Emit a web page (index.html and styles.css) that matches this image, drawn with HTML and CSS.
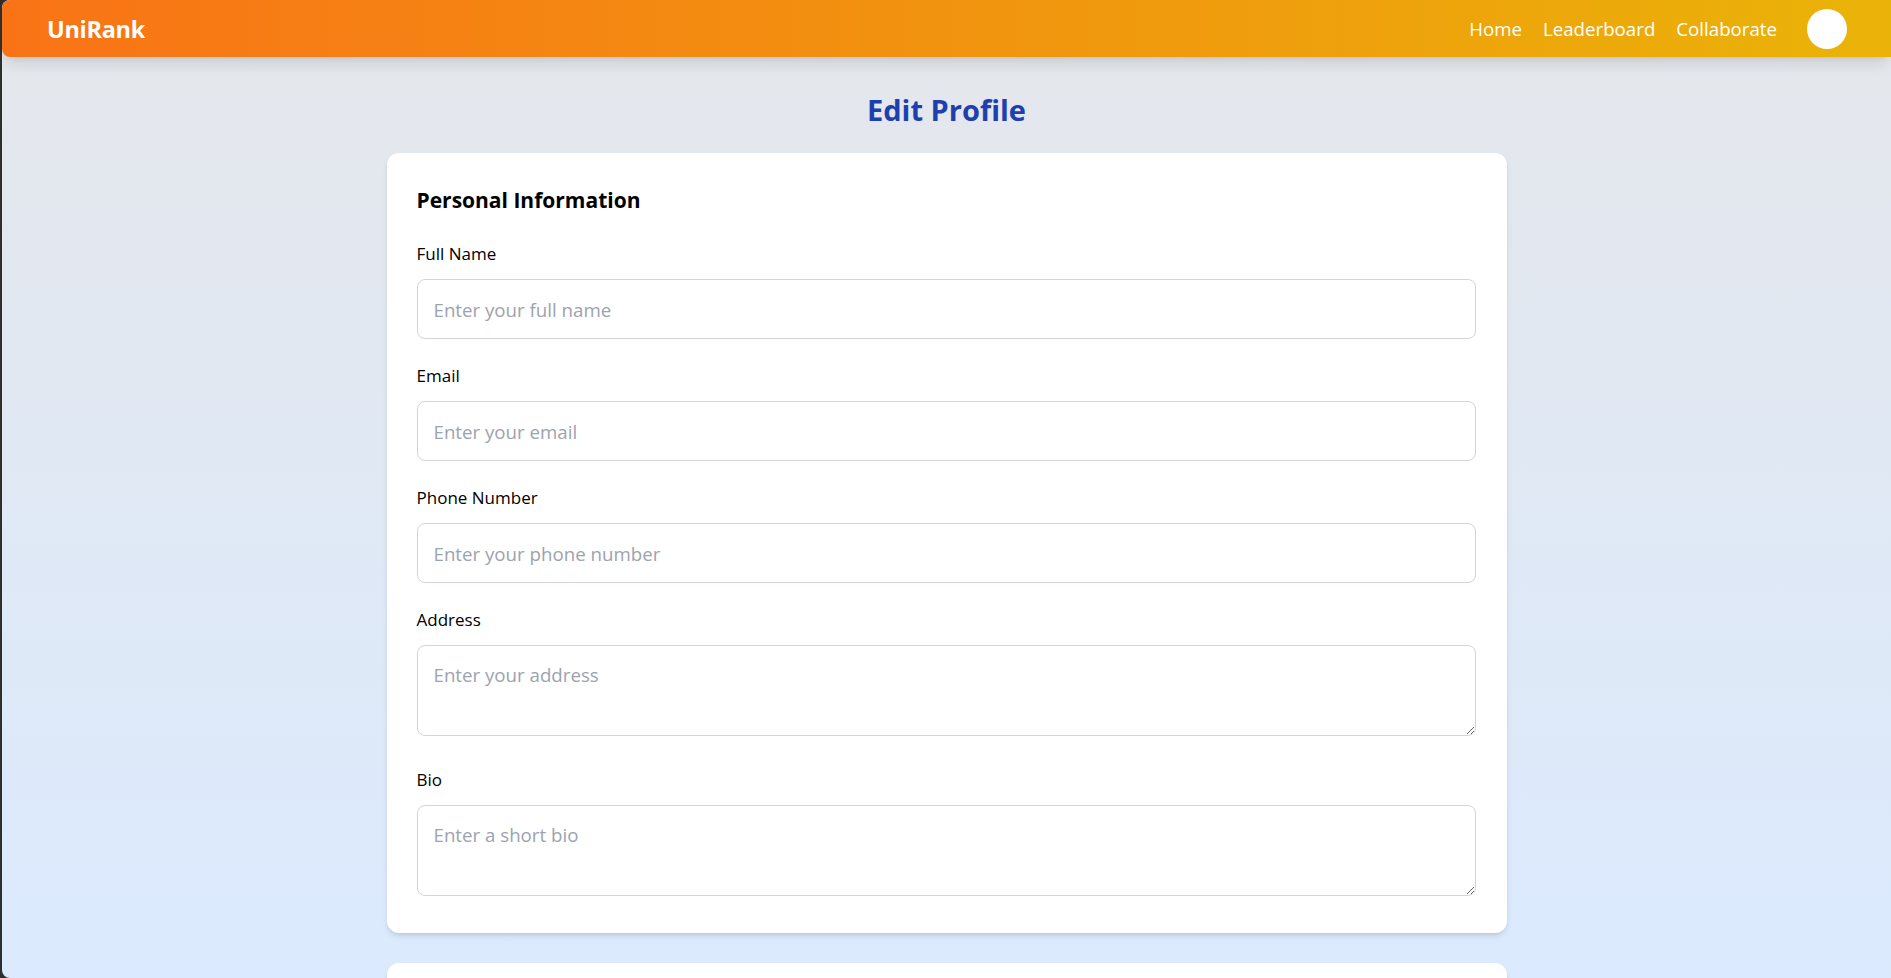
FILE: index.html
```html
<!DOCTYPE html>
<html lang="en">
<head>
<meta charset="utf-8">
<title>UniRank - Edit Profile</title>
<link rel="stylesheet" href="styles.css">
</head>
<body>
<div class="window">
  <header class="navbar">
    <a class="logo" href="#">UniRank</a>
    <nav class="nav">
      <div class="nav-links">
        <a href="#">Home</a>
        <a href="#">Leaderboard</a>
        <a href="#">Collaborate</a>
      </div>
      <div class="avatar"></div>
    </nav>
  </header>
  <main class="main">
    <h1 class="title">Edit Profile</h1>
    <section class="card">
      <h2 class="card-title">Personal Information</h2>
      <div class="field">
        <label class="label">Full Name</label>
        <input class="input" type="text" placeholder="Enter your full name">
      </div>
      <div class="field">
        <label class="label">Email</label>
        <input class="input" type="email" placeholder="Enter your email">
      </div>
      <div class="field">
        <label class="label">Phone Number</label>
        <input class="input" type="tel" placeholder="Enter your phone number">
      </div>
      <div class="field field-textarea">
        <label class="label">Address</label>
        <textarea class="input textarea" placeholder="Enter your address"></textarea>
      </div>
      <div class="field field-textarea field-last">
        <label class="label">Bio</label>
        <textarea class="input textarea" placeholder="Enter a short bio"></textarea>
      </div>
    </section>
    <section class="card card-next"></section>
  </main>
</div>
</body>
</html>
```

FILE: styles.css
```css
html {
  background: #2e2e2e;
}

body {
  margin: 0;
}

.window {
  margin-left: 2px;
  height: 978px;
  overflow: hidden;
  border-radius: 8px 0 0 8px;
  background: linear-gradient(to bottom, #e5e7eb, #dbeafe);
  font-family: "Open Sans", "Noto Sans", sans-serif;
  color: #000;
}

.navbar {
  position: relative;
  z-index: 1;
  height: 57px;
  display: flex;
  align-items: center;
  justify-content: space-between;
  padding: 0 44px 0 45px;
  background: linear-gradient(to right, #f97316, #eab308);
  border-bottom-left-radius: 8px;
  box-shadow: 0 10px 15px -3px rgba(0, 0, 0, 0.1), 0 4px 6px -4px rgba(0, 0, 0, 0.1);
}

.logo {
  color: #fff;
  font-size: 23.5px;
  font-weight: 700;
  text-decoration: none;
  letter-spacing: -0.3px;
}

.nav {
  display: flex;
  align-items: center;
}

.nav-links {
  display: flex;
  gap: 21px;
}

.nav-links a {
  color: #fff;
  font-size: 18.7px;
  text-decoration: none;
}

.avatar {
  width: 40px;
  height: 40px;
  border-radius: 50%;
  background: #fff;
  margin-left: 30px;
}

.main {
  width: 1120px;
  margin: 0 auto;
}

.title {
  margin: 35px 0 25px;
  text-align: center;
  font-size: 29px;
  line-height: 36px;
  font-weight: 700;
  color: #1e40af;
}

.card {
  background: #fff;
  border-radius: 12px;
  padding: 30px 31px 30px 30px;
  margin-bottom: 30px;
  box-shadow: 0 4px 6px -1px rgba(0, 0, 0, 0.1), 0 2px 4px -2px rgba(0, 0, 0, 0.1);
}

.card-next {
  min-height: 200px;
}

.card-title {
  margin: 3px 0 28px;
  font-size: 21px;
  line-height: 28px;
  font-weight: 700;
}

.field {
  margin-bottom: 25px;
}

.field-textarea {
  padding-bottom: 7px;
}

.field-last {
  margin-bottom: 0;
}

.label {
  display: block;
  margin-bottom: 13px;
  font-size: 17px;
  line-height: 24px;
  font-weight: 500;
}

.input {
  display: block;
  box-sizing: border-box;
  width: 100%;
  height: 60px;
  padding: 0 16px;
  border: 1px solid #d1d5db;
  border-radius: 8px;
  background: #fff;
  font-family: inherit;
  font-size: 18.7px;
  color: #111827;
  outline: none;
}

.input::placeholder {
  color: #9ca3af;
}

.textarea {
  height: 91px;
  padding: 15px 16px;
  line-height: 28px;
  resize: vertical;
}
```
